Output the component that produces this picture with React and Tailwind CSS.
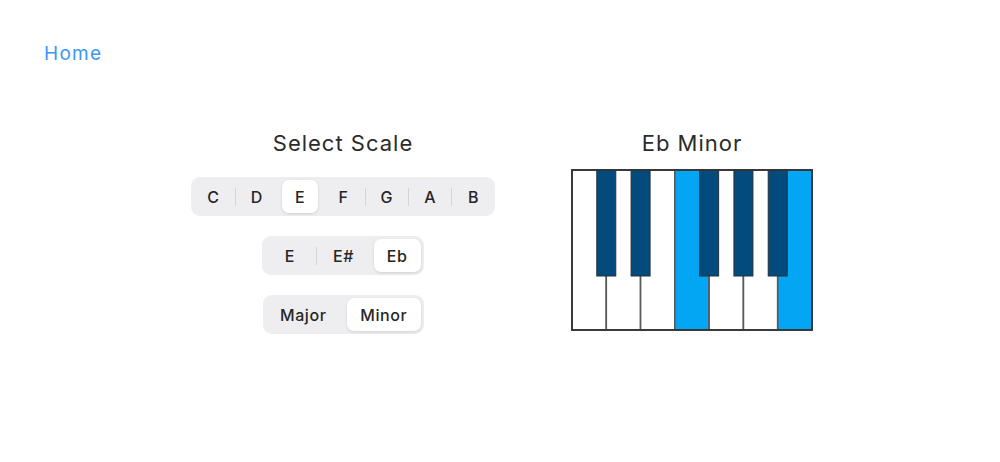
import { useState } from 'react';

const NOTES = ['C', 'D', 'E', 'F', 'G', 'A', 'B'];
const ACCIDENTALS = ['E', 'E#', 'Eb'];
const MODES = ['Major', 'Minor'];

function Segmented({ items, selected, onSelect, itemWidth, className }) {
  return (
    <div className={`flex rounded-[9px] bg-[#eeeef0] py-[3px] ${className || ''}`}>
      {items.map((item, i) => {
        const active = item === selected;
        const showSep = i > 0 && !active && items[i - 1] !== selected;
        return (
          <div key={item} className="flex items-center" style={{ width: itemWidth }}>
            <div className={`h-[18px] w-px ${showSep ? 'bg-[#d4d4d8]' : 'bg-transparent'}`} />
            <button
              onClick={() => onSelect(item)}
              className={`mx-[3px] flex h-[33px] flex-1 items-center justify-center rounded-[7px] text-[16px] font-medium tracking-[0.6px] text-[#262626] ${
                active ? 'bg-white shadow-[0_1px_3px_rgba(0,0,0,0.12)]' : ''
              }`}
            >
              {item}
            </button>
          </div>
        );
      })}
    </div>
  );
}

function Piano({ highlightWhite }) {
  const W = 240;
  const H = 160;
  const kw = W / 7;
  const blackAfter = [0, 1, 3, 4, 5];
  return (
    <svg width={W + 2} height={H + 2} viewBox={`-1 -1 ${W + 2} ${H + 2}`}>
      {NOTES.map((n, i) => (
        <rect
          key={n}
          x={i * kw}
          y={0}
          width={kw}
          height={H}
          fill={highlightWhite.includes(i) ? '#03a6f2' : '#ffffff'}
          stroke="#5a5a5a"
          strokeWidth="1.6"
        />
      ))}
      {blackAfter.map((i) => (
        <rect
          key={i}
          x={(i + 1) * kw - 9.5}
          y={0}
          width={19}
          height={106}
          fill="#034b7c"
          stroke="#25323b"
          strokeWidth="1"
        />
      ))}
      <rect x={0} y={0} width={W} height={H} fill="none" stroke="#333333" strokeWidth="1.8" />
    </svg>
  );
}

export default function App() {
  const [note, setNote] = useState('E');
  const [acc, setAcc] = useState('Eb');
  const [mode, setMode] = useState('Minor');

  return (
    <div className="h-[462px] w-[1000px] bg-white font-['Inter',sans-serif]">
      <div className="pl-[44px] pt-[42px] text-[19px] leading-[23px] tracking-[1.3px] text-[#3a97f6]">Home</div>
      <div className="mt-[65px] flex justify-center gap-[77px] pl-[3px]">
        <div className="flex w-[304px] flex-col items-center">
          <div className="text-[22px] leading-[26px] tracking-[1px] text-[#2b2b2b]">Select Scale</div>
          <Segmented className="mt-[21px]" items={NOTES} selected={note} onSelect={setNote} itemWidth={43.4} />
          <Segmented className="mt-[20px]" items={ACCIDENTALS} selected={acc} onSelect={setAcc} itemWidth={53.7} />
          <Segmented className="mt-[20px]" items={MODES} selected={mode} onSelect={setMode} itemWidth={80.5} />
        </div>
        <div className="flex w-[240px] flex-col items-center">
          <div className="text-[22px] leading-[26px] tracking-[1px] text-[#2b2b2b]">Eb Minor</div>
          <div className="mt-[13px]">
            <Piano highlightWhite={[3, 6]} />
          </div>
        </div>
      </div>
    </div>
  );
}
